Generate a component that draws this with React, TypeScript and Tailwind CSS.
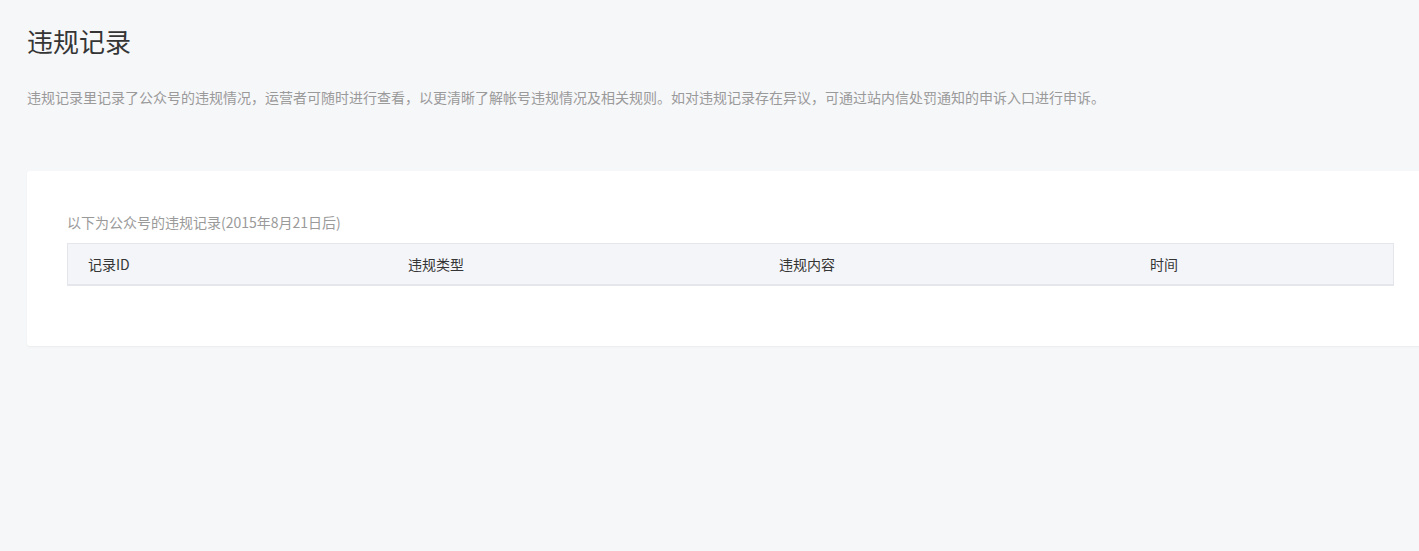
export default function App() {
  const font = { fontFamily: '"Noto Sans CJK SC", "Noto Sans", sans-serif' };
  return (
    <div className="w-[1419px] h-[551px] overflow-hidden bg-[#f6f7f9]" style={font}>
      <div className="pl-[27px] pt-[23px]">
        <h1 className="text-[26px] leading-[36px] text-[#353535] font-normal">违规记录</h1>
        <p className="mt-[28px] text-[14px] leading-[20px] text-[#9a9a9a] whitespace-nowrap">
          违规记录里记录了公众号的违规情况，运营者可随时进行查看，以更清晰了解帐号违规情况及相关规则。如对违规记录存在异议，可通过站内信处罚通知的申诉入口进行申诉。
        </p>
        <div className="mt-[64px] w-[1407px] shrink-0 bg-white rounded-[3px] shadow-[0_1px_2px_rgba(0,0,0,0.05)] pt-[41px] pb-[60px] px-[40px]">
          <p className="text-[14px] leading-[20px] text-[#9a9a9a]">以下为公众号的违规记录(2015年8月21日后)</p>
          <div className="mt-[11px] w-[1327px] border border-[#e4e6eb] border-b-2 bg-[#f4f5f9] flex h-[43px] items-center text-[14px] text-[#353535]">
            <div className="w-[320px] pl-[20px]">记录ID</div>
            <div className="w-[371px] pl-[20px]">违规类型</div>
            <div className="w-[371px] pl-[20px]">违规内容</div>
            <div className="flex-1 pl-[20px]">时间</div>
          </div>
        </div>
      </div>
    </div>
  );
}
